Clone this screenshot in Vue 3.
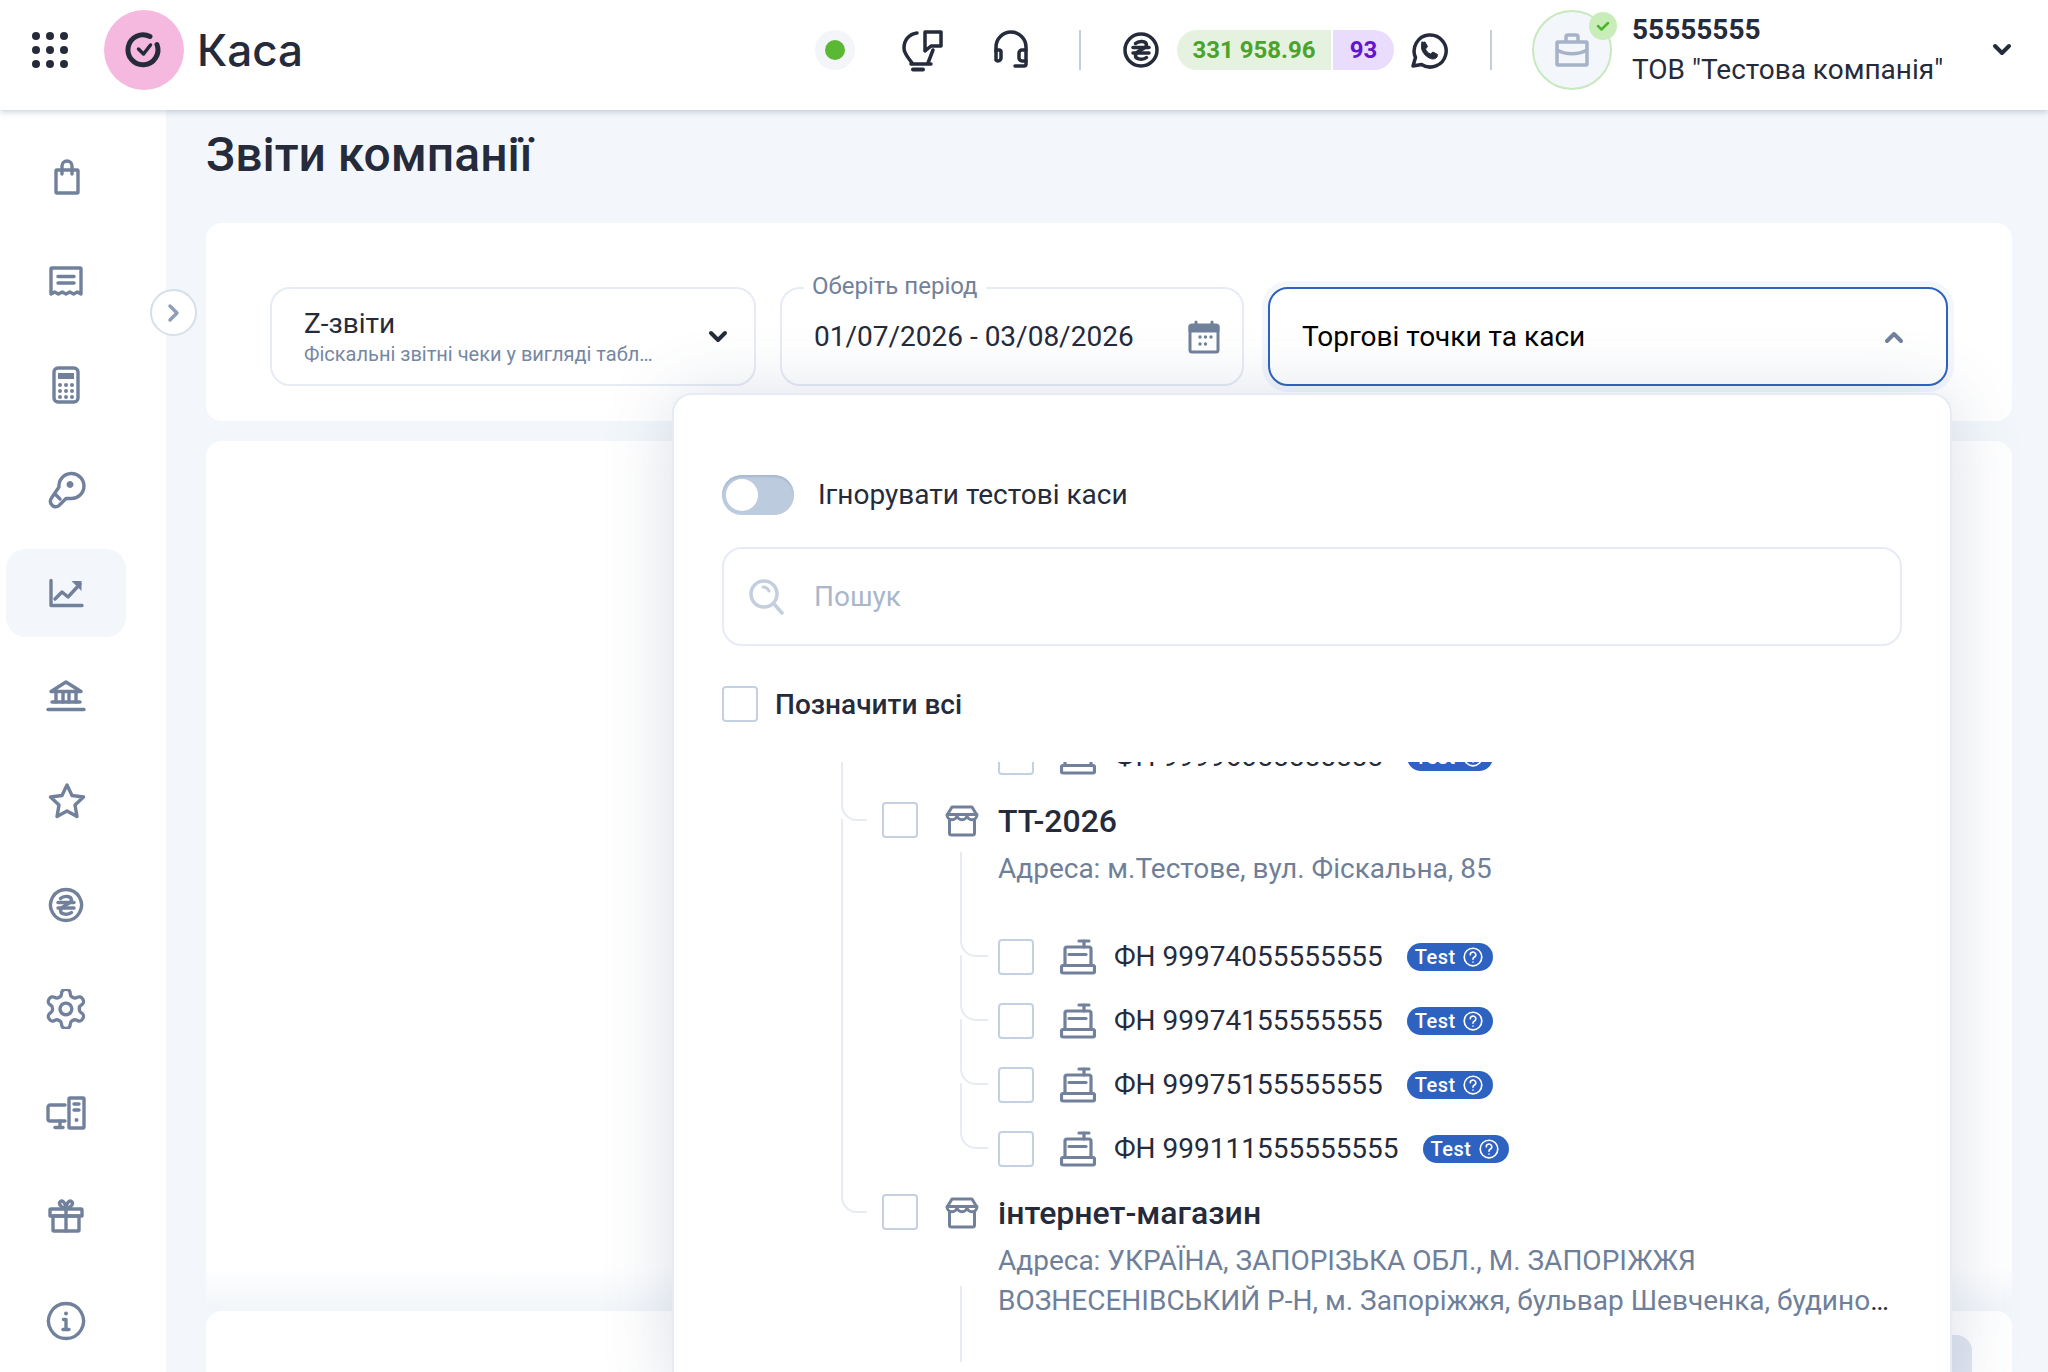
<script setup>
const gear = "M12.22 2h-.44a2 2 0 0 0-2 2v.18a2 2 0 0 1-1 1.73l-.43.25a2 2 0 0 1-2 0l-.15-.08a2 2 0 0 0-2.73.73l-.22.38a2 2 0 0 0 .73 2.73l.15.1a2 2 0 0 1 1 1.72v.51a2 2 0 0 1-1 1.74l-.15.09a2 2 0 0 0-.73 2.73l.22.38a2 2 0 0 0 2.73.73l.15-.08a2 2 0 0 1 2 0l.43.25a2 2 0 0 1 1 1.73V20a2 2 0 0 0 2 2h.44a2 2 0 0 0 2-2v-.18a2 2 0 0 1 1-1.73l.43-.25a2 2 0 0 1 2 0l.15.08a2 2 0 0 0 2.73-.73l.22-.39a2 2 0 0 0-.73-2.73l-.15-.08a2 2 0 0 1-1-1.74v-.5a2 2 0 0 1 1-1.74l.15-.09a2 2 0 0 0 .73-2.73l-.22-.38a2 2 0 0 0-2.73-.73l-.15.08a2 2 0 0 1-2 0l-.43-.25a2 2 0 0 1-1-1.73V4a2 2 0 0 0-2-2z";

const sideIcons = [
  { id: "bag", lines: ["M11 13h20a1 1 0 0 1 1 1v21a1 1 0 0 1-1 1H11a1 1 0 0 1-1-1V14a1 1 0 0 1 1-1z", "M16 17V9a5 5 0 0 1 10 0v8"] },
  { id: "receipt", lines: ["M6 7h28a1 1 0 0 1 1 1v25l-3.700-2-3.700 2-3.800-2-3.800 2-3.800-2-3.800 2-3.700-2-3.700 2V8a1 1 0 0 1 1-1z", "M12 15.500h16", "M12 22h16"] },
  { id: "calc", lines: ["M12 3h16a4 4 0 0 1 4 4v26a4 4 0 0 1-4 4H12a4 4 0 0 1-4-4V7a4 4 0 0 1 4-4z"], solid: ["M12 8h16v6H12z"], dots: [[14, 20], [20, 20], [26, 20], [14, 26], [20, 26], [26, 26], [14, 32], [20, 32], [26, 32]] },
  { id: "key", lines: ["M13 18a12.500 12.500 0 1 1 12 11.500h-5l-7 7a5 5 0 0 1-7.500-1 5 5 0 0 1 0-6.500z", "M9 25l5 5"], solid: ["M24 12a3.500 3.500 0 1 0 .01 0z"] },
  { id: "chart", lines: ["M5 7.500V32.500h31", "M9 26l7-7 6 5 12-13"], solid: ["M25.500 8h10v10z"] },
  { id: "bank", lines: ["M5 14.500L20 5l15 9.500z", "M6 25h28", "M2 32.500h36", "M10 15v10", "M17 15v10", "M23 15v10", "M30 15v10"] },
  { id: "star", lines: ["M21 4l5 10.500 11.500 1.500-8.500 8 2 11.500-10-5.500-10 5.500 2-11.500-8.500-8 11.500-1.500z"] },
  { id: "uah", lines: ["M20 4.500a15.500 15.500 0 1 0 .01 0z", "M12 17.500h16", "M12 23h16", "M14.500 13.500c3-3 11-3 11 1.500 0 4.500-11 5-11 10.500 0 4.500 8 4.500 11 2"] },
  { id: "gear", scale: true, lines: [gear, "M12 9a3 3 0 1 0 .01 0z"] },
  { id: "pc", lines: ["M19 12H4a2 2 0 0 0-2 2v12a2 2 0 0 0 2 2h15", "M14 28v6", "M9 34.500h8", "M24 5h13a1 1 0 0 1 1 1v28a1 1 0 0 1-1 1H24a1 1 0 0 1-1-1V6a1 1 0 0 1 1-1z", "M28 11h5", "M28 17h5"], dots: [[30.500, 27]] },
  { id: "gift", lines: ["M5 12h30a1 1 0 0 1 1 1v6H4v-6a1 1 0 0 1 1-1z", "M7 19h26v14a1 1 0 0 1-1 1H8a1 1 0 0 1-1-1z", "M20 12v22", "M20 12c-3-1-8-4-6-7 2-3 6 1 6 7z", "M20 12c3-1 8-4 6-7-2-3-6 1-6 7z"] },
  { id: "info", lines: ["M20 2.500a17.500 17.500 0 1 0 .01 0z", "M17.500 18.500H20v10", "M17 28.500h6"], dots: [[20, 12.500]] },
];

const firstRows = [
  { id: 1, name: "ФН 99974055555555" },
  { id: 2, name: "ФН 99974155555555" },
  { id: 3, name: "ФН 99975155555555" },
  { id: 4, name: "ФН 999111555555555" },
];
</script>

<template>
  <div class="page">
    <header class="topbar">
      <svg class="apps" width="36" height="36" viewBox="0 0 36 36" fill="#252b3b">
        <template v-for="y in [4, 18, 32]" :key="y">
          <circle v-for="x in [4, 18, 32]" :key="x" :cx="x" :cy="y" r="4" />
        </template>
      </svg>
      <div class="logo">
        <svg width="40" height="40" viewBox="0 0 40 40" fill="none" stroke="#252b3b" stroke-width="5" stroke-linecap="round" stroke-linejoin="round">
          <path d="M26 6.500a15 15 0 1 0 7 8" />
          <path d="M14.500 19l5 5 7-9" stroke-width="3.500" />
        </svg>
      </div>
      <span class="brand">Каса</span>

      <div class="status"><i></i></div>
      <svg class="ico bulb" width="44" height="44" viewBox="0 0 44 44" fill="none" stroke="#252b3b" stroke-width="3.500" stroke-linecap="round" stroke-linejoin="round">
        <path d="M17 5C9 6 4 12 4 20c0 6 4 9 8 15" />
        <path d="M33 22l-5 13" />
        <path d="M11 36h20" />
        <path d="M13 41.500h10" stroke-width="4" />
        <path d="M25 4h16v14H31l-6 5z" />
      </svg>
      <svg class="ico headset" width="40" height="40" viewBox="0 0 40 40" fill="none" stroke="#252b3b" stroke-width="3.500" stroke-linecap="round" stroke-linejoin="round">
        <path d="M5 21v-4a15 15 0 0 1 30 0v17a2 2 0 0 1-2 2h-9" />
        <path d="M5 20h3a2 2 0 0 1 2 2v6a3 3 0 0 1-3 3 3 3 0 0 1-2-1z" />
        <path d="M35 20h-4a3 3 0 0 0-3 3v5a3 3 0 0 0 3 3h4" />
      </svg>
      <div class="vline first"></div>
      <svg class="ico uah" width="40" height="40" viewBox="0 0 40 40" fill="none" stroke="#252b3b" stroke-width="3.500" stroke-linecap="round">
        <circle cx="20" cy="20" r="16" />
        <path d="M12 17.500h16" />
        <path d="M12 23h16" />
        <path d="M14.500 13.500c3-3 11-3 11 1.500 0 4.500-11 5-11 10.500 0 4.500 8 4.500 11 2" />
      </svg>
      <div class="balance">
        <span class="money">331 958.96</span>
        <span class="count">93</span>
      </div>
      <svg class="ico whats" width="40" height="40" viewBox="0 0 40 40" fill="none" stroke="#252b3b" stroke-width="3.500" stroke-linecap="round" stroke-linejoin="round">
        <path d="M5 36l2.500-8.500A16 16 0 1 1 13.500 34.500z" />
        <path d="M14.500 12.500l2.500-.5 2.500 4.500-2 2.500c1 2.500 2.500 4 5 5l2.500-2 4.500 2.500-.5 2.500c-1.500 2-4 2.500-6.500 1.500-4-1.500-7-4.500-8.500-8.500-1-3-.5-6 0-8z" fill="#252b3b" stroke-width="1" />
      </svg>
      <div class="vline"></div>
      <div class="avatar">
        <svg width="34" height="34" viewBox="0 0 34 34" fill="none" stroke="#a6b2c8" stroke-width="3.500" stroke-linejoin="round">
          <path d="M3 9h28a1 1 0 0 1 1 1v21a1 1 0 0 1-1 1H3a1 1 0 0 1-1-1V10a1 1 0 0 1 1-1z" />
          <path d="M11 9V4a2 2 0 0 1 2-2h8a2 2 0 0 1 2 2v5" />
          <path d="M2 17c9 5 21 5 30 0" />
          <path d="M17 19v3" />
        </svg>
        <span class="verified">
          <svg width="14" height="12" viewBox="0 0 14 12" fill="none" stroke="#4bb52c" stroke-width="2.500" stroke-linecap="round" stroke-linejoin="round"><path d="M2 6l3.500 3.500L12 3" /></svg>
        </span>
      </div>
      <div class="account">
        <div class="account-id">55555555</div>
        <div class="account-name">ТОВ "Тестова компанія"</div>
      </div>
      <svg class="chev" width="20" height="14" viewBox="0 0 20 14" fill="none" stroke="#252b3b" stroke-width="4" stroke-linecap="round" stroke-linejoin="round"><path d="M3 3l7 7 7-7" /></svg>
    </header>

    <div class="body">
      <aside class="sidebar">
        <div v-for="item in sideIcons" :key="item.id" class="side-item" :class="{ active: item.id === 'chart' }">
          <svg width="40" height="40" viewBox="0 0 40 40" fill="none" stroke="#72819b" stroke-linecap="round" stroke-linejoin="round">
            <g :transform="item.scale ? 'translate(-3.500 -3.500) scale(1.95)' : undefined" :stroke-width="item.scale ? 1.7 : 3.4">
              <path v-for="d in item.lines" :key="d" :d="d" />
            </g>
            <path v-for="d in item.solid" :key="d" :d="d" fill="#72819b" stroke="none" />
            <circle v-for="p in item.dots" :key="p.join()" :cx="p[0]" :cy="p[1]" r="2" fill="#72819b" stroke="none" />
          </svg>
        </div>
        <button type="button" class="collapse">
          <svg width="14" height="20" viewBox="0 0 14 20" fill="none" stroke="#8f9fb8" stroke-width="3.500" stroke-linecap="round" stroke-linejoin="round"><path d="M3 3l7 7-7 7" /></svg>
        </button>
      </aside>

      <main class="main">
        <h1 class="title">Звіти компанії</h1>

        <section class="card filters">
          <div class="field report">
            <div class="report-text">
              <div class="report-name">Z-звіти</div>
              <div class="report-sub">Фіскальні звітні чеки у вигляді табл…</div>
            </div>
            <svg width="20" height="14" viewBox="0 0 20 14" fill="none" stroke="#252b3b" stroke-width="4" stroke-linecap="round" stroke-linejoin="round"><path d="M3 3l7 7 7-7" /></svg>
          </div>
          <div class="field period">
            <span class="legend">Оберіть період</span>
            <span class="period-value">01/07/2026 - 03/08/2026</span>
            <svg width="32" height="34" viewBox="0 0 32 34" fill="none" stroke="#72819b" stroke-width="3" stroke-linecap="round" stroke-linejoin="round">
              <path d="M4 5h24a2 2 0 0 1 2 2v23a2 2 0 0 1-2 2H4a2 2 0 0 1-2-2V7a2 2 0 0 1 2-2z" />
              <path d="M2 6h28v5H2z" fill="#72819b" />
              <path d="M8 2v3" />
              <path d="M24 2v3" />
              <g fill="#72819b" stroke="none">
                <circle cx="12" cy="17" r="1.700" /><circle cx="17.500" cy="17" r="1.700" /><circle cx="23" cy="17" r="1.700" />
                <circle cx="12" cy="24" r="1.700" /><circle cx="17.500" cy="24" r="1.700" />
              </g>
            </svg>
          </div>
          <div class="field outlets">
            <span>Торгові точки та каси</span>
            <svg width="20" height="14" viewBox="0 0 20 14" fill="none" stroke="#72819b" stroke-width="4" stroke-linecap="round" stroke-linejoin="round"><path d="M3 11l7-7 7 7" /></svg>
          </div>

          <div class="dropdown">
            <div class="switch-row">
              <span class="switch"><i></i></span>
              <span class="switch-label">Ігнорувати тестові каси</span>
            </div>
            <div class="search">
              <svg width="36" height="36" viewBox="0 0 36 36" fill="none" stroke="#c3cfdf" stroke-width="3.500" stroke-linecap="round">
                <circle cx="16" cy="15" r="13" />
                <path d="M26 25l8 9" />
                <path d="M15 8c3 0 5 2 6 4" stroke-width="3" />
              </svg>
              <span>Пошук</span>
            </div>
            <label class="check-all">
              <span class="box"></span>
              <span>Позначити всі</span>
            </label>

            <div class="tree">
              <div class="fn-row clipped">
                <span class="box"></span>
                <svg class="reg" width="36" height="36" viewBox="0 0 36 36" fill="none" stroke="#72819b" stroke-width="3.200" stroke-linecap="round" stroke-linejoin="round">
                  <path d="M19 2h10" /><path d="M24 2v6" />
                  <path d="M5 26V10a2 2 0 0 1 2-2h22a2 2 0 0 1 2 2v16" />
                  <path d="M9 15.500h17" />
                  <path d="M3 26.500h30a1.500 1.500 0 0 1 1.500 1.500v4.500a1.500 1.500 0 0 1-1.500 1.500H3a1.500 1.500 0 0 1-1.500-1.500V28A1.500 1.500 0 0 1 3 26.500z" />
                </svg>
                <span class="fn">ФН 99996055555555</span>
                <span class="badge">Test
                  <svg width="22" height="22" viewBox="0 0 20 20" fill="none" stroke="#fff" stroke-width="1.500" stroke-linecap="round"><circle cx="10" cy="10" r="8" /><path d="M7.500 8a2.500 2.500 0 1 1 3.500 2.300c-.7.400-1 .8-1 1.700" /><path d="M10 14.500v.1" /></svg>
                </span>
              </div>

              <div class="shop-row tall">
                <span class="box"></span>
                <svg class="store" width="34" height="32" viewBox="0 0 34 32" fill="none" stroke="#72819b" stroke-width="3" stroke-linecap="round" stroke-linejoin="round">
                  <path d="M7 2h20l4.500 7.500h-29z" />
                  <path d="M2 9.500c0 7 10 7 10 0 0 7 10 7 10 0 0 7 10 7 10 0" />
                  <path d="M4.500 15v13a2 2 0 0 0 2 2h21a2 2 0 0 0 2-2V15" />
                </svg>
                <span class="shop-name">ТТ-2026</span>
              </div>
              <div class="address">
                <span>Адреса: м.Тестове, вул. Фіскальна, 85</span>
              </div>
              <div class="fn-list">
                <div v-for="row in firstRows" :key="row.id" class="fn-row">
                  <span class="box"></span>
                  <svg class="reg" width="36" height="36" viewBox="0 0 36 36" fill="none" stroke="#72819b" stroke-width="3.200" stroke-linecap="round" stroke-linejoin="round">
                    <path d="M19 2h10" /><path d="M24 2v6" />
                    <path d="M5 26V10a2 2 0 0 1 2-2h22a2 2 0 0 1 2 2v16" />
                    <path d="M9 15.500h17" />
                    <path d="M3 26.500h30a1.500 1.500 0 0 1 1.500 1.500v4.500a1.500 1.500 0 0 1-1.500 1.500H3a1.500 1.500 0 0 1-1.500-1.500V28A1.500 1.500 0 0 1 3 26.500z" />
                  </svg>
                  <span class="fn">{{ row.name }}</span>
                  <span class="badge">Test
                    <svg width="22" height="22" viewBox="0 0 20 20" fill="none" stroke="#fff" stroke-width="1.500" stroke-linecap="round"><circle cx="10" cy="10" r="8" /><path d="M7.500 8a2.500 2.500 0 1 1 3.500 2.300c-.7.400-1 .8-1 1.700" /><path d="M10 14.500v.1" /></svg>
                  </span>
                </div>
              </div>

              <div class="shop-row">
                <span class="box"></span>
                <svg class="store" width="34" height="32" viewBox="0 0 34 32" fill="none" stroke="#72819b" stroke-width="3" stroke-linecap="round" stroke-linejoin="round">
                  <path d="M7 2h20l4.500 7.500h-29z" />
                  <path d="M2 9.500c0 7 10 7 10 0 0 7 10 7 10 0 0 7 10 7 10 0" />
                  <path d="M4.500 15v13a2 2 0 0 0 2 2h21a2 2 0 0 0 2-2V15" />
                </svg>
                <span class="shop-name">інтернет-магазин</span>
              </div>
              <div class="address clamp">
                <span>Адреса: УКРАЇНА, ЗАПОРІЗЬКА ОБЛ., М. ЗАПОРІЖЖЯ ВОЗНЕСЕНІВСЬКИЙ Р-Н, м. Запоріжжя, бульвар Шевченка, будинок 12, офіс 4</span>
              </div>
              <div class="stub"></div>
            </div>
          </div>
        </section>

        <section class="card results"></section>
        <section class="card lower"><div class="lower-btn"></div></section>
      </main>
    </div>
  </div>
</template>

<style scoped>
.page {
  height: 1372px;
  overflow: hidden;
  display: flex;
  flex-direction: column;
  background: #f3f7fb;
  font-family: Roboto, "Noto Sans", sans-serif;
  color: #252b3b;
}

.topbar {
  flex: none;
  height: 110px;
  box-sizing: border-box;
  display: flex;
  align-items: center;
  padding: 0 36px 10px 32px;
  background: #fff;
  box-shadow: 0 2px 6px rgba(70, 90, 125, .28);
  position: relative;
  z-index: 5;
}

.logo {
  width: 80px;
  height: 80px;
  margin-left: 36px;
  border-radius: 50%;
  background: #f5b8de;
  display: flex;
  align-items: center;
  justify-content: center;
}

.brand {
  margin-left: 13px;
  font-family: Inter, Roboto, sans-serif;
  font-size: 44px;
  font-weight: 500;
}

.status {
  margin-left: auto;
  width: 40px;
  height: 40px;
  border-radius: 50%;
  background: #f3f5f8;
  display: flex;
  align-items: center;
  justify-content: center;
}

.status i {
  width: 20px;
  height: 20px;
  border-radius: 50%;
  background: #5ab834;
}

.bulb { margin-left: 45px; }
.headset { margin-left: 47px; }
.uah { margin-left: 40px; }
.whats { margin-left: 14px; }

.vline {
  width: 2px;
  height: 40px;
  margin-left: 42px;
  background: #c2cede;
}

.vline.first { margin-left: 48px; }

.balance {
  margin-left: 16px;
  display: flex;
  gap: 2px;
  height: 40px;
  font-size: 24px;
  font-weight: 700;
  line-height: 40px;
}

.money {
  width: 154px;
  text-align: center;
  border-radius: 20px 0 0 20px;
  background: #e4f2df;
  color: #4ba32b;
}

.count {
  width: 61px;
  text-align: center;
  border-radius: 0 20px 20px 0;
  background: #eadcfd;
  color: #6314d0;
}

.avatar {
  position: relative;
  width: 80px;
  height: 80px;
  box-sizing: border-box;
  margin-left: 40px;
  border: 2px solid #c8e8bd;
  border-radius: 50%;
  background: #f3f7fb;
  display: flex;
  align-items: center;
  justify-content: center;
}

.verified {
  position: absolute;
  top: 0;
  right: -7px;
  width: 28px;
  height: 28px;
  border-radius: 50%;
  background: #c8edb8;
  display: flex;
  align-items: center;
  justify-content: center;
}

.account {
  width: 323px;
  margin-left: 20px;
  font-size: 28px;
  line-height: 40px;
}

.account-id { font-weight: 700; }

.chev { margin-left: 37px; }

.body {
  flex: 1;
  display: flex;
  min-height: 0;
}

.sidebar {
  position: relative;
  z-index: 3;
  flex: none;
  width: 166px;
  box-sizing: border-box;
  padding: 23px 0 0 6px;
  background: #fff;
  display: flex;
  flex-direction: column;
  gap: 16px;
}

.side-item {
  flex: none;
  width: 120px;
  height: 88px;
  border-radius: 20px;
  display: flex;
  align-items: center;
  justify-content: center;
}

.side-item.active { background: #f3f7fb; }

.collapse {
  position: absolute;
  left: 150px;
  top: 179px;
  width: 47px;
  height: 47px;
  padding: 0;
  border: 2px solid #d6dfe9;
  border-radius: 50%;
  background: #fff;
  display: flex;
  align-items: center;
  justify-content: center;
}

.main {
  flex: 1;
  min-width: 0;
  padding: 0 36px 0 40px;
}

.title {
  margin: 17px 0 40px;
  font-size: 48px;
  line-height: 56px;
  font-weight: 500;
}

.card {
  background: #fff;
  border-radius: 16px;
}

.filters {
  position: relative;
  z-index: 2;
  display: flex;
  gap: 24px;
  padding: 64px 64px 35px;
}

.field {
  box-sizing: border-box;
  height: 99px;
  border: 2px solid #e6ebf4;
  border-radius: 20px;
  display: flex;
  align-items: center;
  justify-content: space-between;
  font-size: 28px;
  background: #fff;
}

.report {
  width: 486px;
  padding: 0 26px 0 32px;
}

.report-name {
  margin-top: -2px;
  line-height: 36px;
}

.report-sub {
  font-size: 20px;
  line-height: 24px;
  color: #7587a3;
}

.period {
  position: relative;
  width: 464px;
  padding: 0 22px 0 32px;
}

.legend {
  position: absolute;
  left: 22px;
  top: -18px;
  padding: 0 8px;
  background: #fff;
  font-size: 24px;
  line-height: 30px;
  color: #72819b;
}

.outlets {
  flex: 1;
  padding: 0 42px 0 32px;
  border-color: #2e62c0;
  color: #000;
  box-shadow: 0 0 0 6px #f3f6fb;
}

.dropdown {
  position: absolute;
  left: 466px;
  right: 60px;
  top: 170px;
  height: 1000px;
  box-sizing: border-box;
  padding: 80px 48px 0;
  border: 2px solid #e6ebf4;
  border-radius: 20px;
  background: #fff;
  box-shadow: 0 4px 70px rgba(70, 90, 130, .2);
  font-size: 28px;
}

.switch-row {
  display: flex;
  align-items: center;
  gap: 24px;
  height: 40px;
}

.switch-label { margin-top: -2px; }

.switch {
  position: relative;
  width: 72px;
  height: 40px;
  border-radius: 20px;
  background: #bdcbdf;
  box-shadow: inset 0 2px 2px #a9b8cf;
}

.switch i {
  position: absolute;
  left: 4px;
  top: 4px;
  width: 32px;
  height: 32px;
  border-radius: 50%;
  background: #fff;
}

.search {
  margin-top: 32px;
  height: 99px;
  box-sizing: border-box;
  padding-left: 24px;
  border: 2px solid #e6ebf4;
  border-radius: 20px;
  display: flex;
  align-items: center;
  gap: 30px;
  color: #a9b7c9;
}

.box {
  flex: none;
  width: 36px;
  height: 36px;
  box-sizing: border-box;
  border: 2px solid #c5d1e2;
  border-radius: 4px;
  background: #fff;
}

.check-all {
  margin-top: 40px;
  display: flex;
  align-items: center;
  gap: 17px;
  font-weight: 500;
}

.tree {
  margin-top: 40px;
  height: 600px;
  overflow: hidden;
}

.fn-row,
.shop-row {
  position: relative;
  height: 64px;
  display: flex;
  align-items: center;
}

.clipped { margin: -37px 0 0 276px; }

.fn-list { margin: 36px 0 0 276px; }

.fn-row .reg { margin-left: 26px; }

.fn {
  margin-left: 18px;
  line-height: 36px;
}

.badge {
  margin-left: 24px;
  height: 28px;
  padding: 0 9px 0 8px;
  border-radius: 14px;
  background: #2e62c0;
  color: #fff;
  display: inline-flex;
  align-items: center;
  gap: 6px;
  font-size: 20px;
  font-weight: 500;
  letter-spacing: .5px;
}

.fn-list .fn-row::before,
.shop-row::before {
  content: "";
  position: absolute;
  left: -38px;
  bottom: 50%;
  width: 26px;
  height: 64px;
  border-left: 2px solid #e6ebf4;
  border-bottom: 2px solid #e6ebf4;
  border-bottom-left-radius: 16px;
}

.fn-list .fn-row:first-child::before { height: 103px; }

.shop-row { margin-left: 160px; }

.shop-row .box { margin-top: -3px; }

.shop-row::before {
  left: -41px;
  width: 24px;
  height: 392px;
}

.shop-row .store { margin-left: 27px; }

.shop-name {
  margin-left: 19px;
  font-size: 32px;
  font-weight: 500;
}

.address {
  margin: -4px 0 0 276px;
  width: 898px;
  line-height: 40px;
  color: #252b3b;
}

.address span { color: #6f7f99; }

.clamp {
  display: -webkit-box;
  -webkit-box-orient: vertical;
  -webkit-line-clamp: 2;
  overflow: hidden;
}

.stub {
  margin: -35px 0 0 238px;
  height: 120px;
  border-left: 2px solid #e6ebf4;
}

.results {
  height: 870px;
  margin-top: 20px;
  border-radius: 16px 16px 0 0;
  background: linear-gradient(#fff 95%, #f2f5f9);
}

.lower {
  position: relative;
  height: 100px;
}

.lower-btn {
  position: absolute;
  top: 24px;
  right: 40px;
  width: 60px;
  height: 60px;
  border-radius: 16px;
  background: #e0e6f1;
}
</style>

<style>
body {
  margin: 0;
}
</style>
